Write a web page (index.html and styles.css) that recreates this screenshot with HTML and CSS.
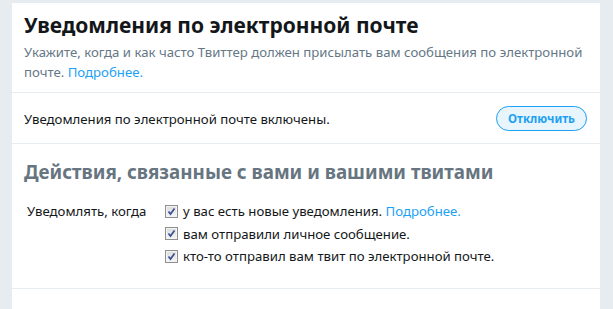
FILE: index.html
```html
<!DOCTYPE html>
<html lang="ru">
<head>
<meta charset="utf-8">
<link rel="stylesheet" href="styles.css">
</head>
<body>
<div class="card">
  <div class="header">
    <h1 class="title">Уведомления по электронной почте</h1>
    <p class="subtitle">Укажите, когда и как часто Твиттер должен присылать вам сообщения по электронной почте. <a class="link" href="#">Подробнее.</a></p>
  </div>
  <div class="status-row">
    <span class="status-text">Уведомления по электронной почте включены.</span>
    <button class="btn">Отключить</button>
  </div>
  <div class="section">
    <h2 class="section-title">Действия, связанные с вами и вашими твитами</h2>
    <div class="form-row">
      <div class="label">Уведомлять, когда</div>
      <div class="options">
        <div class="option"><span class="cb"><svg viewBox="0 0 11 11" width="11" height="11"><path d="M2.5 5.5 L4.5 8 L8.5 2.5" fill="none" stroke="#3b4f91" stroke-width="1.7"/></svg></span><span>у вас есть новые уведомления. <a class="link" href="#">Подробнее.</a></span></div>
        <div class="option"><span class="cb"><svg viewBox="0 0 11 11" width="11" height="11"><path d="M2.5 5.5 L4.5 8 L8.5 2.5" fill="none" stroke="#3b4f91" stroke-width="1.7"/></svg></span><span>вам отправили личное сообщение.</span></div>
        <div class="option"><span class="cb"><svg viewBox="0 0 11 11" width="11" height="11"><path d="M2.5 5.5 L4.5 8 L8.5 2.5" fill="none" stroke="#3b4f91" stroke-width="1.7"/></svg></span><span>кто-то отправил вам твит по электронной почте.</span></div>
      </div>
    </div>
  </div>
  <div class="section-empty"></div>
</div>
</body>
</html>
```
FILE: styles.css
```css
html, body {
  margin: 0;
  padding: 0;
  background: #e6ecf0;
  font-family: "Noto Sans", "Open Sans", sans-serif;
  overflow: hidden;
}
.card {
  margin: 3px 13px 0 12px;
  background: #fff;
  height: 320px;
}
.header {
  padding: 9px 12px 10px 12px;
  border-bottom: 1px solid #e6ecf0;
}
.title {
  margin: 0 0 4px 0;
  font-size: 21px;
  font-weight: 700;
  line-height: 26px;
  color: #14171a;
}
.subtitle {
  margin: 0;
  font-size: 13.2px;
  line-height: 20px;
  color: #657786;
}
.link {
  color: #1da1f2;
  text-decoration: none;
}
.status-row {
  display: flex;
  align-items: center;
  justify-content: space-between;
  padding: 13px 13px 12px 12px;
  border-bottom: 1px solid #e6ecf0;
}
.status-text {
  font-size: 13.2px;
  color: #14171a;
}
.btn {
  font-family: inherit;
  font-size: 11.6px;
  font-weight: 700;
  color: #1da1f2;
  background: #e8f5fd;
  border: 1px solid #1da1f2;
  border-radius: 100px;
  height: 25px;
  width: 91px;
  padding: 0;
}
.section {
  padding: 15px 12px 20px 12px;
  border-bottom: 1px solid #e6ecf0;
}
.section-title {
  margin: 0 0 15px 0;
  font-size: 18.8px;
  font-weight: 700;
  color: #66757f;
  line-height: 26px;
}
.form-row {
  display: flex;
  font-size: 13.2px;
  color: #14171a;
}
.label {
  width: 138px;
  padding-left: 3px;
  line-height: 22.5px;
}
.options {
  display: flex;
  flex-direction: column;
}
.option {
  display: flex;
  align-items: center;
  gap: 5px;
  line-height: 22.5px;
}
.cb {
  width: 11px;
  height: 11px;
  border: 1px solid #8e8f8f;
  background: linear-gradient(#dcdcdc, #f6f6f6);
  box-shadow: inset 0 0 0 1px #f4f4f4;
  display: inline-flex;
  align-items: center;
  justify-content: center;
  overflow: hidden;
  flex: none;
}
.cb svg { flex: none; }
```
